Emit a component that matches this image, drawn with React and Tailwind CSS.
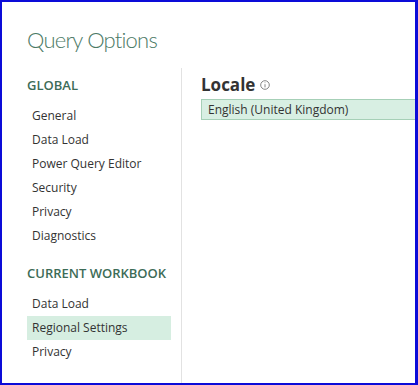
const globalItems = ['General', 'Data Load', 'Power Query Editor', 'Security', 'Privacy', 'Diagnostics']
const workbookItems = ['Data Load', 'Regional Settings', 'Privacy']

function NavItem({ label, active }) {
  return (
    <div
      className={`flex h-[24px] items-center pl-[5px] text-[12px] text-[#333333] ${
        active ? 'bg-[#d6eee1]' : ''
      }`}
    >
      {label}
    </div>
  )
}

function InfoIcon() {
  return (
    <svg viewBox="0 0 10 10" className="h-[10px] w-[10px]" fill="none" stroke="#666" strokeWidth="0.8">
      <circle cx="5" cy="5" r="4.3" />
      <line x1="5" y1="4.2" x2="5" y2="7.4" />
      <circle cx="5" cy="2.8" r="0.45" fill="#666" stroke="none" />
    </svg>
  )
}

export default function App() {
  return (
    <div
      className="flex h-[385px] w-[418px] flex-col overflow-hidden border-t-2 border-r-[3px] border-b-2 border-l-2 border-[#0c0cd8] bg-white"
      style={{ fontFamily: '"Open Sans", "Noto Sans", sans-serif' }}
    >
      <div
        className="h-[66px] shrink-0 pt-[23px] pl-[25px] text-[22px] leading-[30px] font-light tracking-[-0.8px] text-[#4c7a66]"
        style={{ fontFamily: 'Lato, "Open Sans", sans-serif' }}
      >
        Query Options
      </div>

      <div className="flex min-h-0 flex-1">
        {/* sidebar */}
        <div className="w-[180px] shrink-0 border-r border-[#e2e2e2] pt-[6px] pr-[10px] pl-[25px]">
          <div className="mb-[6px] flex h-[24px] items-center text-[13px] font-semibold text-[#3d6c57]">
            GLOBAL
          </div>
          {globalItems.map((item) => (
            <NavItem key={item} label={item} />
          ))}

          <div className="mt-[14px] mb-[6px] flex h-[24px] items-center text-[13px] font-semibold text-[#3d6c57]">
            CURRENT WORKBOOK
          </div>
          {workbookItems.map((item) => (
            <NavItem key={item} label={item} active={item === 'Regional Settings'} />
          ))}
        </div>

        {/* content */}
        <div className="min-w-0 flex-1 overflow-hidden pt-[5px] pl-[19px]">
          <div className="flex h-[24px] items-center gap-[5px]">
            <span className="text-[17px] font-bold text-[#333333]">Locale</span>
            <InfoIcon />
          </div>
          <div className="mt-[2px] flex h-[21px] w-[260px] items-center border border-[#a6d0b7] bg-[#d8efe3] pl-[6px] text-[12px] text-[#333333]">
            English (United Kingdom)
          </div>
        </div>
      </div>
    </div>
  )
}
